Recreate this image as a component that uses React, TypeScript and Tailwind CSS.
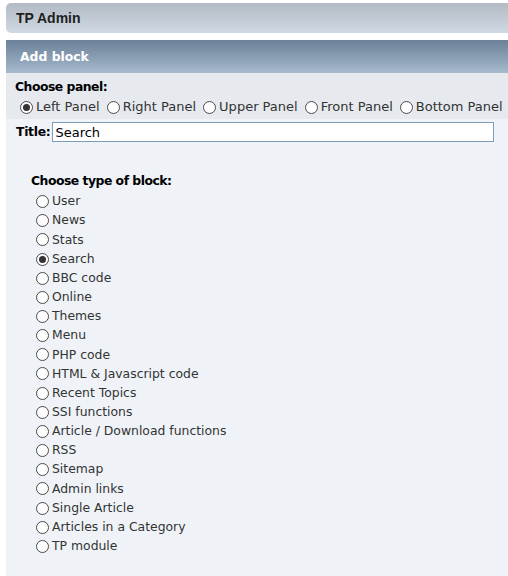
import { useState } from "react";

const PANELS = ["Left Panel", "Right Panel", "Upper Panel", "Front Panel", "Bottom Panel"];

const BLOCK_TYPES = [
  "User",
  "News",
  "Stats",
  "Search",
  "BBC code",
  "Online",
  "Themes",
  "Menu",
  "PHP code",
  "HTML & Javascript code",
  "Recent Topics",
  "SSI functions",
  "Article / Download functions",
  "RSS",
  "Sitemap",
  "Admin links",
  "Single Article",
  "Articles in a Category",
  "TP module",
];

function Radio({ checked }: { checked: boolean }) {
  return (
    <span className="flex h-[13px] w-[13px] shrink-0 items-center justify-center rounded-full border border-[#4a4a4a] bg-white">
      {checked && <span className="block h-[7px] w-[7px] rounded-full bg-[#333]" />}
    </span>
  );
}

export default function App() {
  const [panel, setPanel] = useState("Left Panel");
  const [blockType, setBlockType] = useState("Search");
  const [title, setTitle] = useState("Search");

  return (
    <div className="min-h-[576px] bg-white pl-[6px] pt-[3px] font-['DejaVu_Sans',Verdana,sans-serif] text-[13px]">
      {/* Top title bar */}
      <div className="flex h-[30px] items-center rounded-l-[5px] bg-gradient-to-b from-[#b2bac3] to-[#d0dae4] pl-[10px] font-['Liberation_Sans',Arial,sans-serif] text-[14px] font-bold text-[#1e1e1e]">
        TP Admin
      </div>

      {/* Category header */}
      <div className="mt-[7px] flex h-[33px] items-center bg-gradient-to-b from-[#6b8197] to-[#a7bace] pl-[14px] pt-[1px] text-[12.4px] font-bold text-white">
        Add block
      </div>

      {/* Panel choice */}
      <div className="bg-[#e6eaef] pb-[4px] pl-[9px] pt-[6px]">
        <div className="text-[12.4px] font-bold leading-[16px] tracking-[-0.5px] text-black">Choose panel:</div>
        <div className="mt-[4px] flex items-center gap-[7px] pl-[5px] text-[#333]">
          {PANELS.map((p) => (
            <label key={p} className="flex cursor-pointer items-center gap-[3px] leading-[16px]" onClick={() => setPanel(p)}>
              <Radio checked={panel === p} />
              <span>{p}</span>
            </label>
          ))}
        </div>
      </div>

      {/* Rest */}
      <div className="min-h-[457px] bg-[#eff3f7] pl-[10px] pt-[3px]">
        <div className="flex items-center gap-[2px]">
          <span className="text-[12.4px] font-bold tracking-[-0.3px] text-black">Title:</span>
          <input
            value={title}
            onChange={(e) => setTitle(e.target.value)}
            className="h-[20px] w-[442px] border border-[#7e9bb9] bg-white px-[2px] text-[13px] text-black outline-none"
          />
        </div>

        <div className="pl-[15px] pt-[31px]">
          <div className="text-[12.4px] font-bold leading-[16px] tracking-[-0.5px] text-black">Choose type of block:</div>
          <div className="mt-[3px] flex flex-col pl-[5px] text-[12.4px] text-[#333]">
            {BLOCK_TYPES.map((t) => (
              <label
                key={t}
                className="flex h-[19.17px] cursor-pointer items-center gap-[3px]"
                onClick={() => setBlockType(t)}
              >
                <Radio checked={blockType === t} />
                <span>{t}</span>
              </label>
            ))}
          </div>
        </div>
      </div>
    </div>
  );
}
